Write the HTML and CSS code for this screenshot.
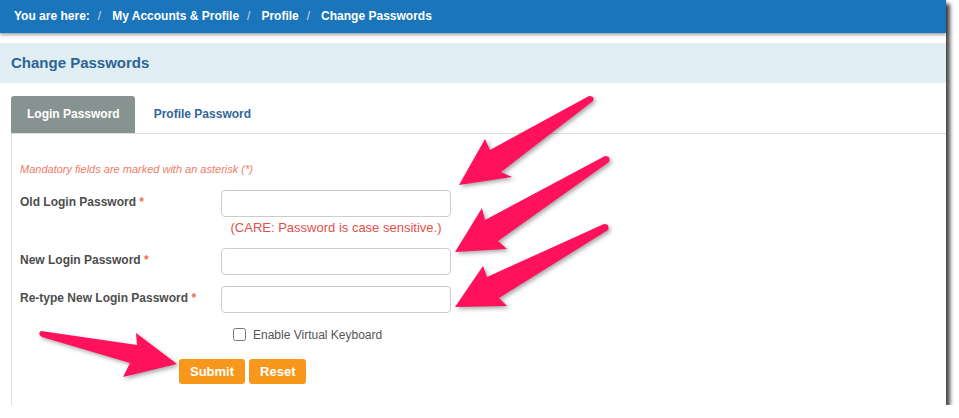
FILE: index.html
```html
<!DOCTYPE html>
<html lang="en">
<head>
<meta charset="utf-8">
<title>Change Passwords</title>
<link rel="stylesheet" href="styles.css">
</head>
<body>
<div class="page">
  <div class="crumbs">
    <span>You are here:</span><span class="sep">/</span>
    <span>My Accounts &amp; Profile</span><span class="sep">/</span>
    <span>Profile</span><span class="sep">/</span>
    <span>Change Passwords</span>
  </div>
  <div class="title">Change Passwords</div>
  <div class="tabs">
    <div class="tab active">Login Password</div>
    <div class="tab">Profile Password</div>
  </div>
  <div class="panel">
    <p class="note">Mandatory fields are marked with an asterisk (*)</p>
    <div class="row first">
      <label class="lbl">Old Login Password <span class="req">*</span></label>
      <div class="field">
        <input class="inp" type="password">
        <div class="care">(CARE: Password is case sensitive.)</div>
      </div>
    </div>
    <div class="row second">
      <label class="lbl">New Login Password <span class="req">*</span></label>
      <div class="field"><input class="inp" type="password"></div>
    </div>
    <div class="row third">
      <label class="lbl">Re-type New Login Password <span class="req">*</span></label>
      <div class="field"><input class="inp" type="password"></div>
    </div>
    <div class="vk">
      <input class="chk" type="checkbox" id="vk">
      <label for="vk">Enable Virtual Keyboard</label>
    </div>
    <div class="actions">
      <button class="btn" type="button">Submit</button>
      <button class="btn" type="button">Reset</button>
    </div>
  </div>
  <svg class="arrows" width="946" height="405" viewBox="0 0 946 405" aria-hidden="true">
    <path d="M589,96 L490,150 L485,139 L459,185 L512,177 L501,172 L593,101 Q595,96 589,96 Z"/>
    <path d="M605,156 L485,220 L482,208 L455,252 L507,249 L498,241 L609,162 Q611,156 605,156 Z"/>
    <path d="M604,224 L487,277 L483,266 L455,307 L507,306 L499,298 L608,230 Q610,224 604,224 Z"/>
    <path d="M41,331 L137,345 L136,333 L177,364 L123,377 L130,363 L42,337 Q37,334 41,331 Z"/>
  </svg>
</div>
</body>
</html>
```
FILE: styles.css
```css
html, body {
  margin: 0;
  padding: 0;
  background: #ffffff;
}

body {
  font-family: "Liberation Sans", Arial, sans-serif;
}

.page {
  position: relative;
  width: 946px;
  height: 405px;
  background: #ffffff;
  box-shadow: 4px 4px 4px rgba(0, 0, 0, 0.72);
  display: flex;
  flex-direction: column;
}

.crumbs {
  height: 33px;
  flex: none;
  background: #1b75bb;
  color: #ffffff;
  font-size: 12px;
  font-weight: bold;
  line-height: 33px;
  padding-left: 14px;
  box-shadow: 0 2px 3px rgba(0, 0, 0, 0.35);
  position: relative;
  z-index: 1;
  display: flex;
  white-space: nowrap;
}

.sep {
  font-weight: normal;
  color: rgba(255, 255, 255, 0.75);
  margin: 0 11px 0 8px;
}

.title {
  flex: none;
  margin-top: 10px;
  height: 40px;
  line-height: 40px;
  background: #e1eef3;
  color: #2c6496;
  font-size: 15px;
  font-weight: bold;
  padding-left: 11px;
}

.tabs {
  flex: none;
  display: flex;
  margin-left: 11px;
  padding-top: 13px;
  border-bottom: 1px solid #dddddd;
}

.tab {
  height: 37px;
  line-height: 37px;
  padding: 0 16px;
  font-size: 12px;
  font-weight: bold;
  color: #336699;
  margin-left: 3px;
}

.tab.active {
  margin-left: 0;
  padding: 0 15px 0 16px;
  background: #879391;
  color: #ffffff;
  border-radius: 3px 3px 0 0;
}

.panel {
  flex: 1;
  margin-left: 11px;
  border-left: 1px solid #dddddd;
  padding: 28px 0 0 8px;
}

.note {
  margin: 0;
  font-size: 11px;
  line-height: 14px;
  font-style: italic;
  color: #ef7b66;
}

.row {
  display: flex;
  align-items: flex-start;
}

.row.first { margin-top: 14px; }
.row.second { margin-top: 13px; }
.row.third { margin-top: 11px; }

.lbl {
  width: 201px;
  flex: none;
  padding-top: 5px;
  font-size: 12px;
  line-height: 14px;
  font-weight: bold;
  color: #4d4d4d;
}

.req {
  color: #f26c4f;
  font-weight: bold;
}

.field {
  width: 230px;
}

.inp {
  display: block;
  box-sizing: border-box;
  width: 230px;
  height: 27px;
  margin: 0;
  border: 1px solid #cccccc;
  border-radius: 4px;
  background: #ffffff;
}

.care {
  margin-top: 3px;
  text-align: center;
  font-size: 13px;
  line-height: 15px;
  color: #e0504c;
  white-space: nowrap;
}

.vk {
  display: flex;
  align-items: center;
  margin-top: 15px;
  padding-left: 201px;
  height: 13px;
  font-size: 12px;
  color: #555555;
}

.chk {
  width: 13px;
  height: 13px;
  margin: 0 7px 0 12px;
}

.actions {
  display: flex;
  gap: 4px;
  margin-top: 18px;
  margin-left: 159px;
}

.btn {
  height: 25px;
  padding: 0 11px;
  border: none;
  border-radius: 3px;
  background: #f7981d;
  color: #ffffff;
  font-family: "Liberation Sans", Arial, sans-serif;
  font-size: 13px;
  font-weight: bold;
}

.arrows {
  position: absolute;
  left: 0;
  top: 0;
  pointer-events: none;
  fill: #ff115b;
  filter: drop-shadow(2px 2px 2px rgba(0, 0, 0, 0.35));
}
```
